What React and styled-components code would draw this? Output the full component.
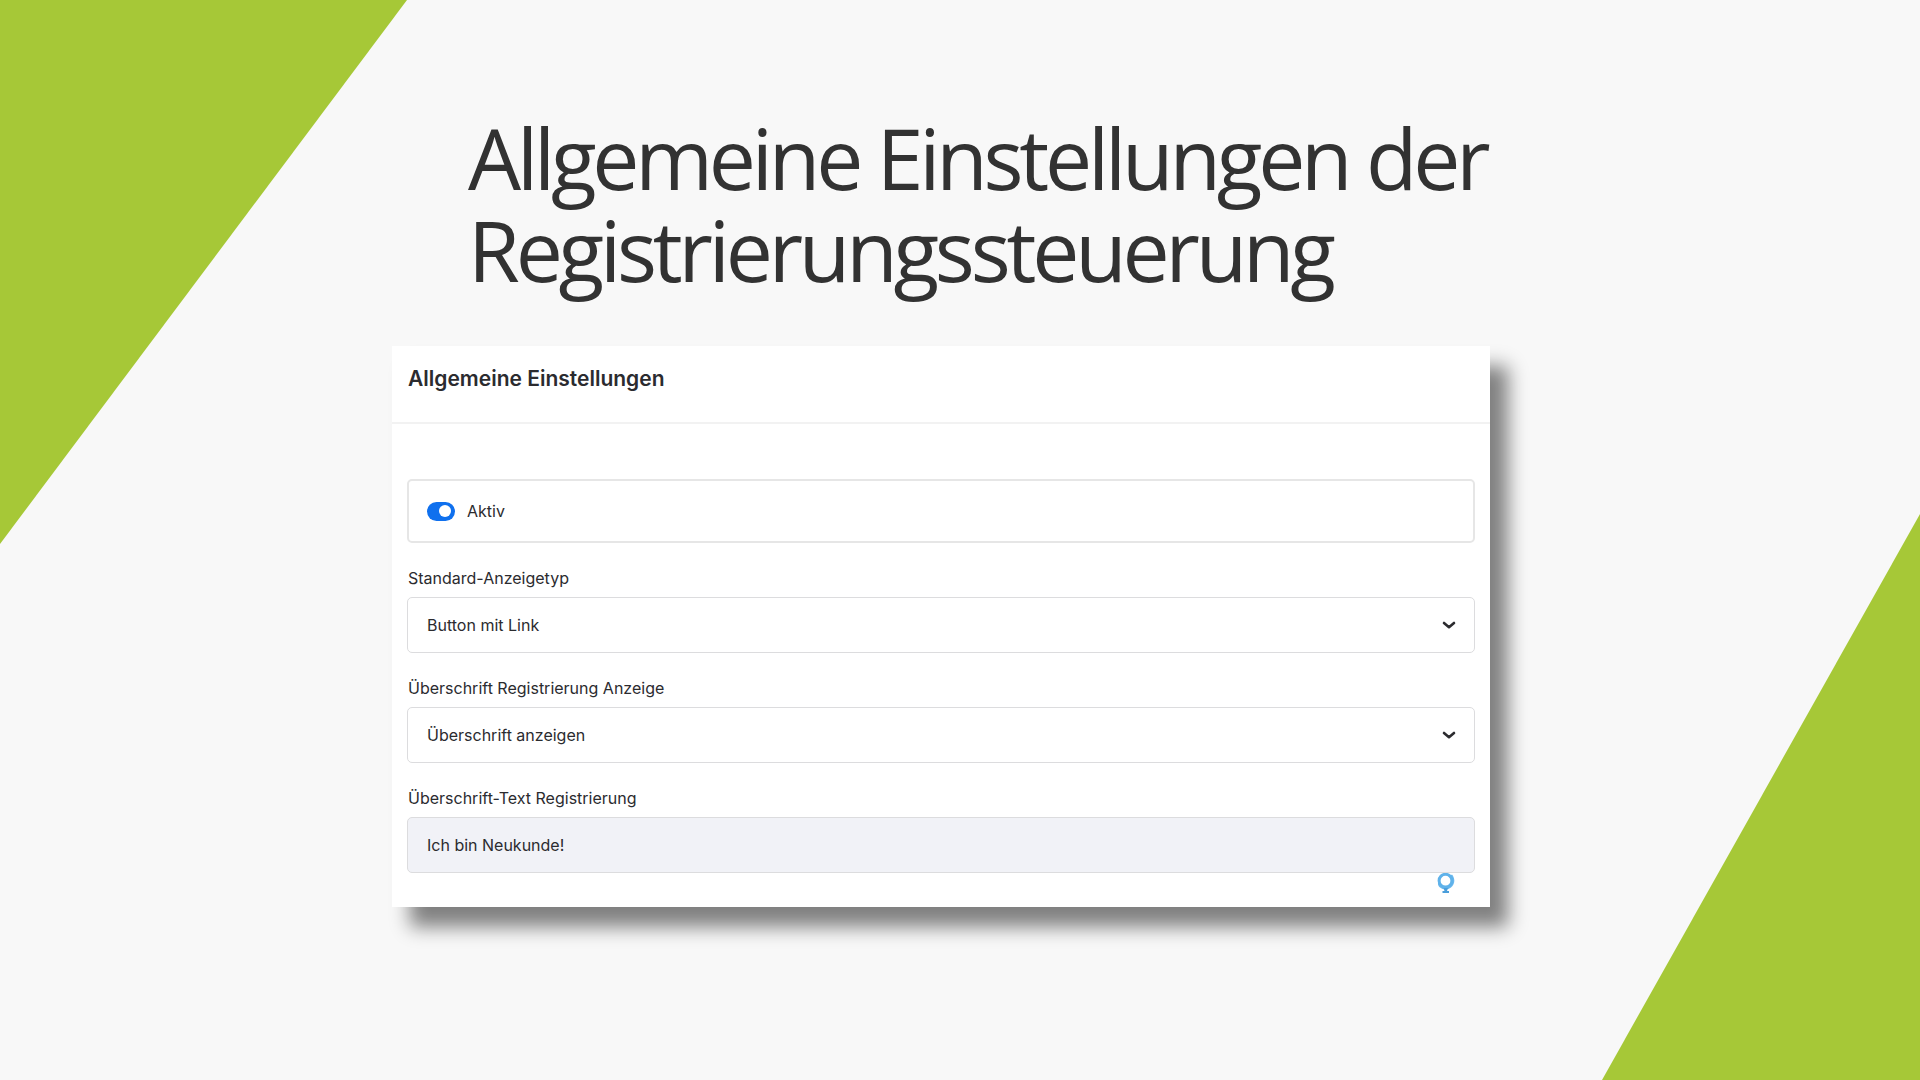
import React from "react";
import styled, { createGlobalStyle } from "styled-components";

const GlobalStyle = createGlobalStyle`
  *, *::before, *::after { box-sizing: border-box; }
  body {
    margin: 0;
    background: #f8f8f8;
    color: #2b2b2f;
    font-family: Inter, "Liberation Sans", sans-serif;
  }
`;

const Slide = styled.div`
  position: relative;
  display: grid;
  grid-template-columns: 392fr 1098fr 430fr;
  align-items: start;
  min-height: 100vh;
  overflow: hidden;

  &::before,
  &::after {
    content: "";
    position: absolute;
    background: #a6c837;
  }
  &::before {
    top: 0;
    left: 0;
    width: 407px;
    height: 544px;
    clip-path: polygon(0 0, 100% 0, 0 100%);
  }
  &::after {
    right: 0;
    bottom: 0;
    width: 318px;
    height: 566px;
    clip-path: polygon(100% 0, 100% 100%, 0 100%);
  }
`;

const Content = styled.main`
  grid-column: 2;
  display: flex;
  flex-direction: column;
  gap: 50px;
  padding: 112px 0 48px;
`;

const Title = styled.h1`
  margin: 0;
  padding-left: 76px;
  color: #323232;
  font: 400 84px/92px "Open Sans", "Noto Sans", sans-serif;
  letter-spacing: -0.05em;
`;

const Card = styled.section`
  background: #fff;
  box-shadow: 18px 20px 18px #808080;
`;

const CardHeader = styled.header`
  padding: 21px 16px 31px;
  border-bottom: 2px solid #f2f2f2;
`;

const CardTitle = styled.h2`
  margin: 0;
  font-size: 21px;
  font-weight: 600;
  line-height: 24px;
`;

const Form = styled.form`
  display: flex;
  flex-direction: column;
  gap: 23px;
  padding: 55px 15px 34px;
  font-size: 16px;
  line-height: 24px;
`;

const SwitchRow = styled.label`
  display: flex;
  align-items: center;
  gap: 12px;
  height: 64px;
  padding: 0 18px;
  border: 2px solid #e6e6e6;
  border-radius: 5px;
`;

const Switch = styled.input`
  appearance: none;
  display: flex;
  align-items: center;
  justify-content: flex-end;
  width: 28px;
  height: 19px;
  margin: 0;
  padding: 0 4px;
  border-radius: 10px;
  background: #0f70ee;

  &::before {
    content: "";
    width: 12px;
    height: 12px;
    border-radius: 50%;
    background: #fff;
  }
  &:not(:checked) {
    justify-content: flex-start;
    background: #b4b8c0;
  }
`;

const Field = styled.div`
  display: flex;
  flex-direction: column;
  gap: 7px;
`;

const Label = styled.label`
  padding-left: 1px;
`;

const Control = styled.div`
  display: grid;
  grid-template-columns: 1fr 33px;
  align-items: center;
`;

const controlStyle = `
  width: 100%;
  height: 56px;
  margin: 0;
  padding: 0 19px;
  border: 1px solid #dcdcde;
  border-radius: 5px;
  color: inherit;
  font: inherit;
`;

const Select = styled.select`
  ${controlStyle}
  appearance: none;
  grid-area: 1 / 1 / 2 / 3;
  background: #fff;
`;

const TextInput = styled.input`
  ${controlStyle}
  background: #f1f2f7;
`;

const Chevron = styled.svg`
  grid-area: 1 / 2;
  width: 14px;
  height: 10px;
  pointer-events: none;
`;

const BadgeAnchor = styled.div`
  position: relative;
  display: flex;
`;

const Badge = styled.svg`
  position: absolute;
  top: 100%;
  right: 20px;
  width: 18px;
  height: 20px;
`;

function SelectField({ id, label, options }) {
  return (
    <Field>
      <Label htmlFor={id}>{label}</Label>
      <Control>
        <Select id={id}>
          {options.map((option) => (
            <option key={option}>{option}</option>
          ))}
        </Select>
        <Chevron viewBox="0 0 14 10" aria-hidden="true">
          <path d="M2 3 7 7.2 12 3" fill="none" stroke="#2b2b2f" strokeWidth="2.6" strokeLinecap="round" strokeLinejoin="round" />
        </Chevron>
      </Control>
    </Field>
  );
}

export default function App() {
  return (
    <>
      <GlobalStyle />
      <Slide>
        <Content>
          <Title>Allgemeine Einstellungen der Registrierungssteuerung</Title>
          <Card>
            <CardHeader>
              <CardTitle>Allgemeine Einstellungen</CardTitle>
            </CardHeader>
            <Form>
              <SwitchRow htmlFor="aktiv">
                <Switch id="aktiv" type="checkbox" role="switch" defaultChecked />
                Aktiv
              </SwitchRow>
              <SelectField id="anzeigetyp" label="Standard-Anzeigetyp" options={["Button mit Link"]} />
              <SelectField id="anzeige" label="Überschrift Registrierung Anzeige" options={["Überschrift anzeigen"]} />
              <Field>
                <Label htmlFor="text">Überschrift-Text Registrierung</Label>
                <BadgeAnchor>
                  <TextInput id="text" type="text" defaultValue="Ich bin Neukunde!" />
                  <Badge viewBox="0 0 18 20" aria-hidden="true">
                    <path d="M15 1.5C18 5 18.5 11 14 14.5c-3 2.500-8 2.500-11 0C1.500 13 .8 12 1 10z" fill="#6cb9ee" />
                    <circle cx="8.500" cy="7.700" r="6.400" fill="#fff" stroke="#5fb2ea" strokeWidth="3" />
                    <path d="M5.500 20v-2H7.500l-1-3h4.500l-1 3h2v2z" fill="#4a9edb" />
                  </Badge>
                </BadgeAnchor>
              </Field>
            </Form>
          </Card>
        </Content>
      </Slide>
    </>
  );
}
